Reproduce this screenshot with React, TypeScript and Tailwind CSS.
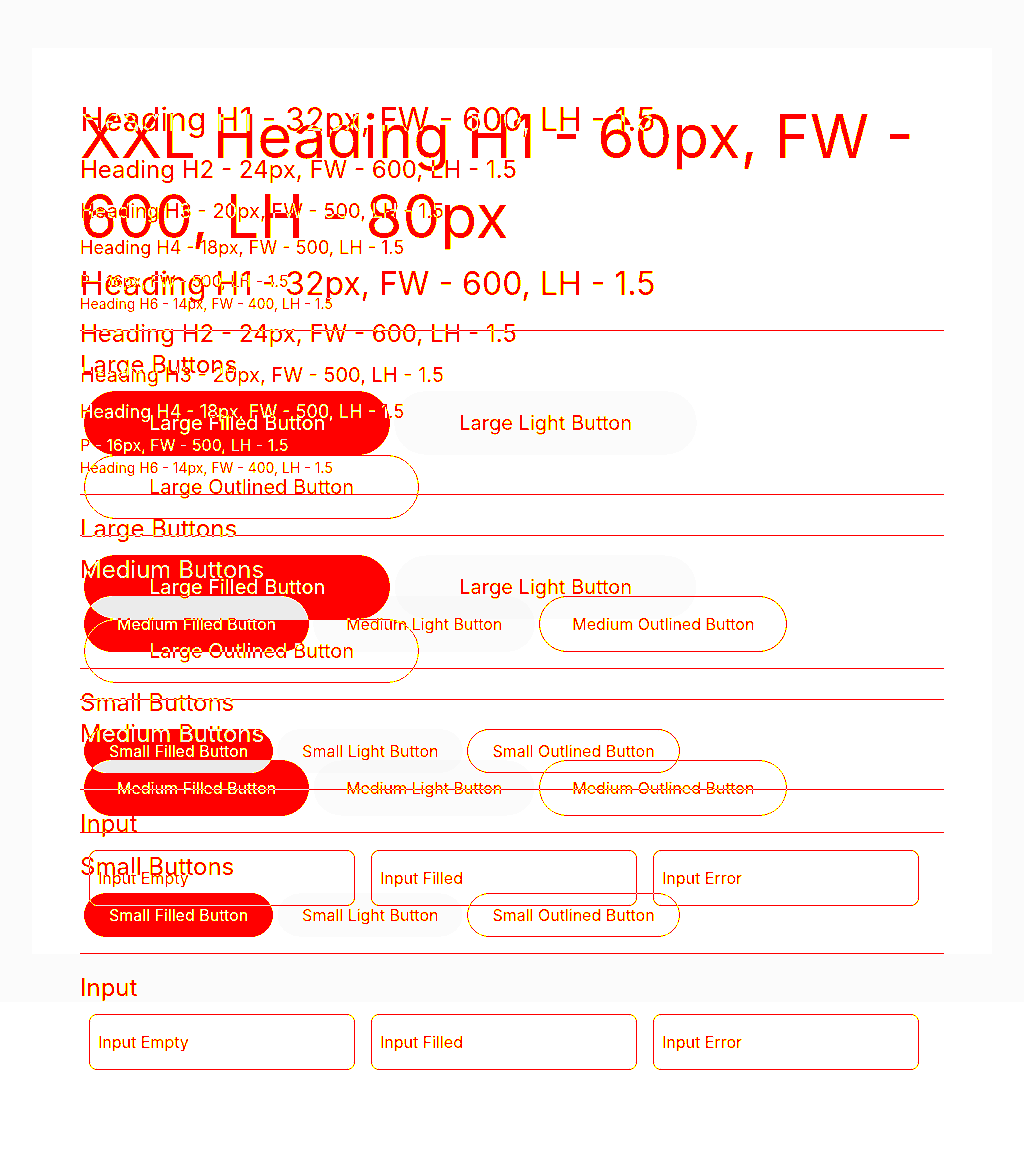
import type { ReactNode } from "react";

// Two passes of the same style sheet share one grid cell.
// Pass A paints black ink, pass B paints light ink with a difference blend,
// the sheet is screened onto red and a posterize filter turns soft edges yellow.
type Ink = {
  ink: string;
  fill: string;
  line: string;
  onFill: string;
  soft: string;
};

const passA: Ink = {
  ink: "text-black",
  fill: "bg-black border-black",
  line: "border-black",
  onFill: "text-white",
  soft: "bg-[#fcfcfc] border-transparent",
};

const passB: Ink = {
  ink: "text-[#ececec]",
  fill: "bg-[#ececec] border-[#ececec]",
  line: "border-[#ececec]",
  onFill: "text-black",
  soft: "bg-[#030303] border-transparent",
};

const sizes = {
  large: "px-16 py-4 text-xl leading-[30px]",
  medium: "px-8 py-[15px] text-base leading-6",
  small: "px-6 py-[9px] text-base leading-6",
} as const;

// discrete lookup on the grey level: dark -> red, mid -> yellow, light -> grey as is
const steps = Array.from({ length: 100 }, (_, k) => k);
const light = (k: number) => (k < 90 || k === 99 ? 1 : (k + 0.5) / 100);
const redTable = steps.map((k) => (k < 70 ? 1 : light(k))).join(" ");
const greenTable = steps.map((k) => (k < 35 ? 0 : light(k))).join(" ");
const blueTable = steps.map((k) => (k < 70 ? 0 : light(k))).join(" ");

function ButtonRow({
  t,
  size,
  label,
}: {
  t: Ink;
  size: keyof typeof sizes;
  label: string;
}) {
  const base = `rounded-full border whitespace-nowrap ${sizes[size]}`;
  return (
    <div className="mt-2 flex flex-wrap gap-x-1 pl-1">
      <button type="button" className={`${base} ${t.fill} ${t.onFill}`}>
        {label} Filled Button
      </button>
      <button type="button" className={`${base} ${t.soft} ${t.ink}`}>
        {label} Light Button
      </button>
      <button type="button" className={`${base} ${t.line} ${t.ink} bg-transparent`}>
        {label} Outlined Button
      </button>
    </div>
  );
}

function Section({
  t,
  title,
  children,
}: {
  t: Ink;
  title: string;
  children: ReactNode;
}) {
  return (
    <section>
      <hr className={`my-4 ${t.line}`} />
      <h2 className="text-2xl leading-9">{title}</h2>
      {children}
    </section>
  );
}

function Guide({
  t,
  xxl,
  className,
}: {
  t: Ink;
  xxl?: boolean;
  className: string;
}) {
  return (
    <div className={`${className} ${t.ink}`}>
      {xxl && (
        <h1 className="mb-1 text-[60px] leading-[80px]">
          XXL Heading H1 - 60px, FW - 600, LH - 80px
        </h1>
      )}
      <h1 className="mb-2 text-[32px] leading-[48px]">
        Heading H1 - 32px, FW - 600, LH - 1.5
      </h1>
      <h2 className="mb-2 text-2xl leading-9">Heading H2 - 24px, FW - 600, LH - 1.5</h2>
      <h3 className="mb-2 text-xl leading-[30px]">
        Heading H3 - 20px, FW - 500, LH - 1.5
      </h3>
      <h4 className="mb-2 text-lg leading-[27px]">
        Heading H4 - 18px, FW - 500, LH - 1.5
      </h4>
      <p className="text-base leading-6">P - 16px, FW - 500, LH - 1.5</p>
      <h6 className="text-sm leading-[21px]">Heading H6 - 14px, FW - 400, LH - 1.5</h6>

      <Section t={t} title="Large Buttons">
        <ButtonRow t={t} size="large" label="Large" />
      </Section>
      <Section t={t} title="Medium Buttons">
        <ButtonRow t={t} size="medium" label="Medium" />
      </Section>
      <Section t={t} title="Small Buttons">
        <ButtonRow t={t} size="small" label="Small" />
      </Section>
      <Section t={t} title="Input">
        <div className="mt-2 flex gap-4 pl-[9px]">
          {["Input Empty", "Input Filled", "Input Error"].map((label) => (
            <div
              key={label}
              className={`flex h-14 w-[266px] items-center rounded-lg border px-2 text-base ${t.line}`}
            >
              {label}
            </div>
          ))}
        </div>
      </Section>
    </div>
  );
}

export default function App() {
  return (
    <>
      <svg className="h-0 w-0" aria-hidden="true">
        <filter id="posterize" colorInterpolationFilters="sRGB">
          <feColorMatrix
            type="matrix"
            values="0 1 0 0 0  0 1 0 0 0  0 0 1 0 0  0 0 0 1 0"
          />
          <feComponentTransfer>
            <feFuncR type="discrete" tableValues={redTable} />
            <feFuncG type="discrete" tableValues={greenTable} />
            <feFuncB type="discrete" tableValues={blueTable} />
          </feComponentTransfer>
        </filter>
      </svg>
      <div className="min-h-screen bg-[#ff0000] font-['Inter','Noto_Sans',sans-serif] [filter:url(#posterize)]">
        <div className="min-h-screen bg-white mix-blend-screen">
          <div className="bg-[#fcfcfc] px-8 py-12">
            <div className="grid bg-white p-12">
              <Guide t={passA} className="col-start-1 row-start-1" />
              <Guide
                t={passB}
                xxl
                className="col-start-1 row-start-1 h-0 mix-blend-difference"
              />
            </div>
          </div>
        </div>
      </div>
    </>
  );
}
